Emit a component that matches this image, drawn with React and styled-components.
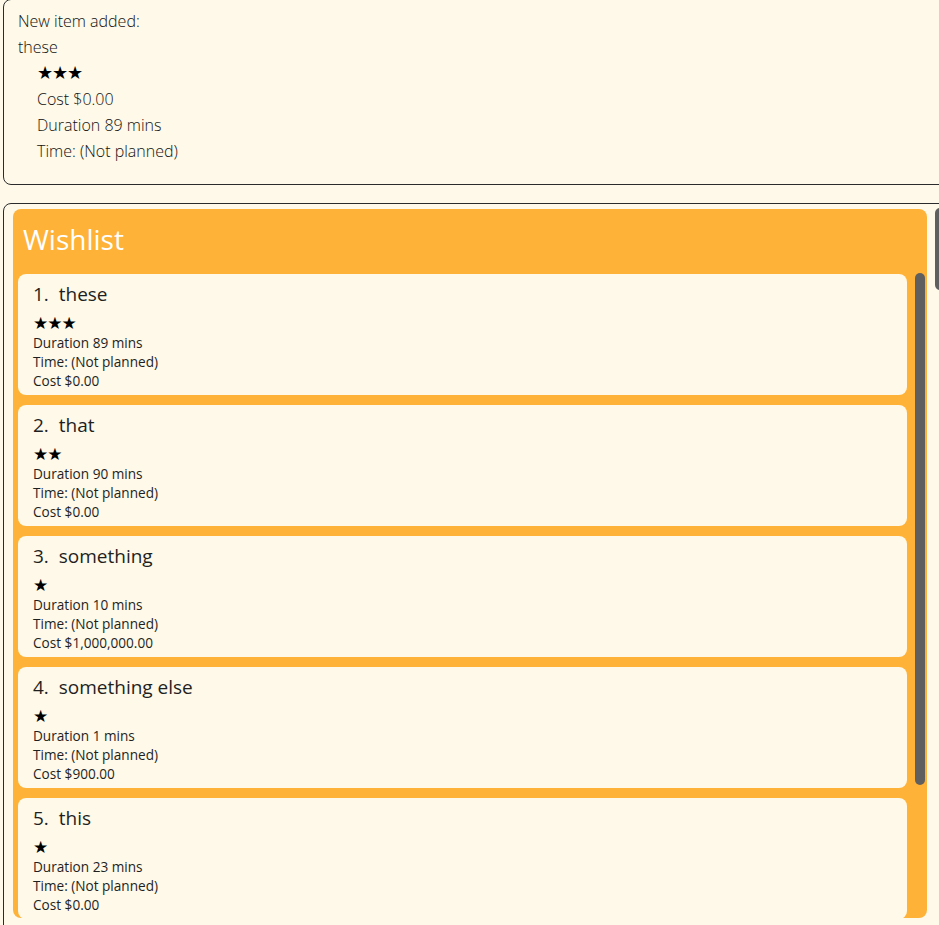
import React from "react";
import styled, { createGlobalStyle } from "styled-components";

const GlobalStyle = createGlobalStyle`
  html, body {
    margin: 0;
    padding: 0;
    background: #fef9e8;
    overflow: hidden;
  }
  body {
    font-family: "Open Sans", "Noto Sans", sans-serif;
    color: #1f1f1f;
  }
`;

const Page = styled.div`
  display: flex;
  flex-direction: column;
  gap: 18px;
  padding-left: 3px;
  width: 960px;
`;

const ResultBox = styled.div`
  margin-top: -1px;
  height: 186px;
  box-sizing: border-box;
  border: 1px solid #2b2b2b;
  border-radius: 8px;
  padding: 8px 14px;
  font-weight: 300;
  font-size: 16px;
  line-height: 26px;
  color: #111;
`;

const Indent = styled.div`
  padding-left: 19px;
`;

const Stars = styled.div`
  font-family: "DejaVu Sans", sans-serif;
  font-size: ${(p) => p.size || 16}px;
  line-height: ${(p) => p.lh || 26}px;
  margin-top: ${(p) => p.mt || 0}px;
  color: #000;
  letter-spacing: -1px;
`;

const ListBox = styled.div`
  position: relative;
  height: 740px;
  box-sizing: border-box;
  border: 1px solid #2b2b2b;
  border-radius: 8px;
  padding: 5px 9px;
`;

const PeekThumb = styled.div`
  position: absolute;
  left: 931px;
  top: 4px;
  width: 10px;
  height: 82px;
  border-radius: 5px;
  background: #5f5f5f;
`;

const Panel = styled.div`
  width: 914px;
  height: 709px;
  background: #ffb238;
  border-radius: 8px;
  display: flex;
  flex-direction: column;
  overflow: hidden;
`;

const Heading = styled.div`
  height: 64px;
  padding-left: 10px;
  font-size: 28px;
  line-height: 60px;
  color: #fff;
  flex-shrink: 0;
`;

const Body = styled.div`
  flex: 1;
  min-height: 0;
  display: flex;
`;

const CardList = styled.div`
  flex: 1;
  overflow: hidden;
  padding: 1px 0 0 5px;
  display: flex;
  flex-direction: column;
  gap: 10px;
`;

const Rail = styled.div`
  width: 10px;
  padding: 0 2px 0 8px;
  flex-shrink: 0;
`;

const Thumb = styled.div`
  height: 512px;
  border-radius: 5px;
  background: #5f5f5f;
`;

const Card = styled.div`
  flex-shrink: 0;
  height: 121px;
  box-sizing: border-box;
  background: #fef9e8;
  border-radius: 8px;
  padding: 6px 15px 0;
  font-size: 13.6px;
  line-height: 19px;
  color: #1f1f1f;
`;

const Title = styled.div`
  font-size: 19px;
  line-height: 28px;
  white-space: pre;
`;

const items = [
  { name: "these", stars: 3, duration: 89, cost: "$0.00" },
  { name: "that", stars: 2, duration: 90, cost: "$0.00" },
  { name: "something", stars: 1, duration: 10, cost: "$1,000,000.00" },
  { name: "something else", stars: 1, duration: 1, cost: "$900.00" },
  { name: "this", stars: 1, duration: 23, cost: "$0.00" },
];

export default function App() {
  return (
    <>
      <GlobalStyle />
      <Page>
        <ResultBox>
          <div>New item added:</div>
          <div>these</div>
          <Indent>
            <Stars size={18}>★★★</Stars>
            <div>Cost $0.00</div>
            <div>Duration 89 mins</div>
            <div>Time: (Not planned)</div>
          </Indent>
        </ResultBox>
        <ListBox>
          <PeekThumb />
          <Panel>
            <Heading>Wishlist</Heading>
            <Body>
              <CardList>
                {items.map((it, i) => (
                  <Card key={i}>
                    <Title>{`${i + 1}.  ${it.name}`}</Title>
                    <Stars size={17} lh={20} mt={5}>{"★".repeat(it.stars)}</Stars>
                    <div>Duration {it.duration} mins</div>
                    <div>Time: (Not planned)</div>
                    <div>Cost {it.cost}</div>
                  </Card>
                ))}
              </CardList>
              <Rail>
                <Thumb />
              </Rail>
            </Body>
          </Panel>
        </ListBox>
      </Page>
    </>
  );
}
